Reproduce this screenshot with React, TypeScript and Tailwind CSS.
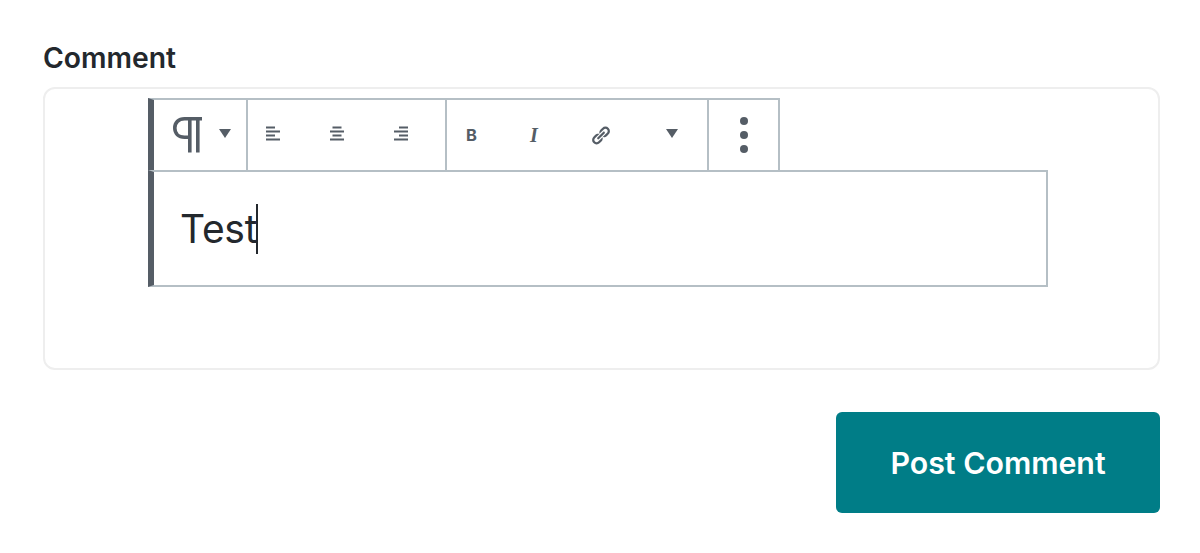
function AlignIcon({ lines }: { lines: [number, number][] }) {
  return (
    <svg className="block -mt-[3px]" width="15" height="15" viewBox="0 0 15 15" fill="#555d66">
      {lines.map(([x, w], i) => (
        <rect key={i} x={x} y={i * 4 + 0.5} width={w} height="2" />
      ))}
    </svg>
  )
}

function Caret({ className }: { className: string }) {
  return (
    <svg className={className} width="12" height="9" viewBox="0 0 12 9" fill="#555d66">
      <path d="M0 0h12L6 9z" />
    </svg>
  )
}

export default function App() {
  return (
    <div className="w-[1200px] h-[553px] overflow-hidden bg-white px-[43px] pt-[42px] font-['Inter',sans-serif]">
      <label className="block text-[28.3px] leading-[33px] font-semibold text-[#23282d]">Comment</label>

      <div className="mt-[12px] h-[283px] w-[1117px] rounded-[12px] border-2 border-[#eeeeee] pl-[103px] pt-[9px]">
        <div className="flex h-[74px] w-[632px] border-t-2 border-b-2 border-r-2 border-l-[6px] border-t-[#b5bfc5] border-b-[#b5bfc5] border-r-[#b5bfc5] border-l-[#555d66]">
          <div className="flex w-[94px] shrink-0 items-center border-r-2 border-[#b5bfc5]">
            <svg className="ml-[19px] block" width="30" height="36" viewBox="0 0 30 36" fill="none" stroke="#555d66" strokeWidth="3.6">
              <path d="M29 1.8H11.5C5.5 1.8 1.8 5.5 1.8 11s3.7 9.2 9.7 9.2H16" />
              <path d="M16.8 1.8V35.5M24.8 1.8V35.5" />
            </svg>
            <Caret className="ml-[16px] -mt-[3px]" />
          </div>

          <div className="flex w-[199px] shrink-0 items-center border-r-2 border-[#b5bfc5] pl-[18px]">
            <AlignIcon lines={[[0, 9], [0, 14], [0, 9], [0, 14]]} />
            <span className="ml-[49px]">
              <AlignIcon lines={[[2.5, 9], [0, 14], [2.5, 9], [0, 14]]} />
            </span>
            <span className="ml-[49px]">
              <AlignIcon lines={[[5, 9], [0, 14], [5, 9], [0, 14]]} />
            </span>
          </div>

          <div className="flex w-[262px] shrink-0 items-center border-r-2 border-[#b5bfc5] pl-[19px]">
            <span className="w-[12px] text-[16.5px] leading-none font-bold text-[#555d66]">B</span>
            <span className="ml-[52px] w-[14px] font-['Liberation_Serif',serif] text-[20px] leading-none font-bold text-[#555d66] italic">I</span>
            <svg className="ml-[46px] block" width="21" height="21" viewBox="0 0 20 20" fill="#555d66">
              <path d="M17.74 2.76c1.68 1.69 1.68 4.41 0 6.1l-1.53 1.52c-1.12 1.12-2.7 1.47-4.14 1.09l2.62-2.61.76-.77.76-.76c.84-.84.84-2.2 0-3.04-.84-.85-2.2-.85-3.04 0l-.77.76-3.38 3.38c-.37-1.44-.02-3.02 1.1-4.14l1.52-1.53c1.69-1.68 4.42-1.68 6.1 0zM8.59 13.43l5.34-5.34c.42-.42.42-1.1 0-1.52-.44-.43-1.13-.39-1.53 0l-5.33 5.34c-.42.42-.42 1.1 0 1.52.44.43 1.13.39 1.52 0zm-.76 2.29l4.14-4.15c.38 1.44.03 3.02-1.09 4.14l-1.52 1.53c-1.69 1.68-4.41 1.68-6.1 0-1.68-1.68-1.68-4.42 0-6.1l1.53-1.52c1.12-1.12 2.7-1.47 4.14-1.1l-4.14 4.15c-.85.84-.85 2.2 0 3.05.84.84 2.2.84 3.04 0z" />
            </svg>
            <Caret className="ml-[55px] -mt-[3px]" />
          </div>

          <div className="flex w-[69px] shrink-0 flex-col items-center justify-center gap-[6px]">
            <span className="h-[8px] w-[8px] rounded-full bg-[#555d66]" />
            <span className="h-[8px] w-[8px] rounded-full bg-[#555d66]" />
            <span className="h-[8px] w-[8px] rounded-full bg-[#555d66]" />
          </div>
        </div>

        <div className="-mt-[2px] flex h-[117px] w-[900px] items-center border-t-2 border-b-2 border-r-2 border-l-[6px] border-t-[#b5bfc5] border-b-[#b5bfc5] border-r-[#b5bfc5] border-l-[#555d66] pl-[26px]">
          <span className="text-[39px] leading-[50px] tracking-[-0.25px] text-[#23282d]">Test</span>
          <span className="-ml-[1px] h-[50px] w-[2px] bg-[#23282d]" />
        </div>
      </div>

      <div className="mt-[42px] flex w-[1117px] justify-end">
        <button className="h-[101px] w-[324px] rounded-[6px] bg-[#007d87] pt-[2px] text-[30.3px] font-semibold text-white">Post Comment</button>
      </div>
    </div>
  )
}
